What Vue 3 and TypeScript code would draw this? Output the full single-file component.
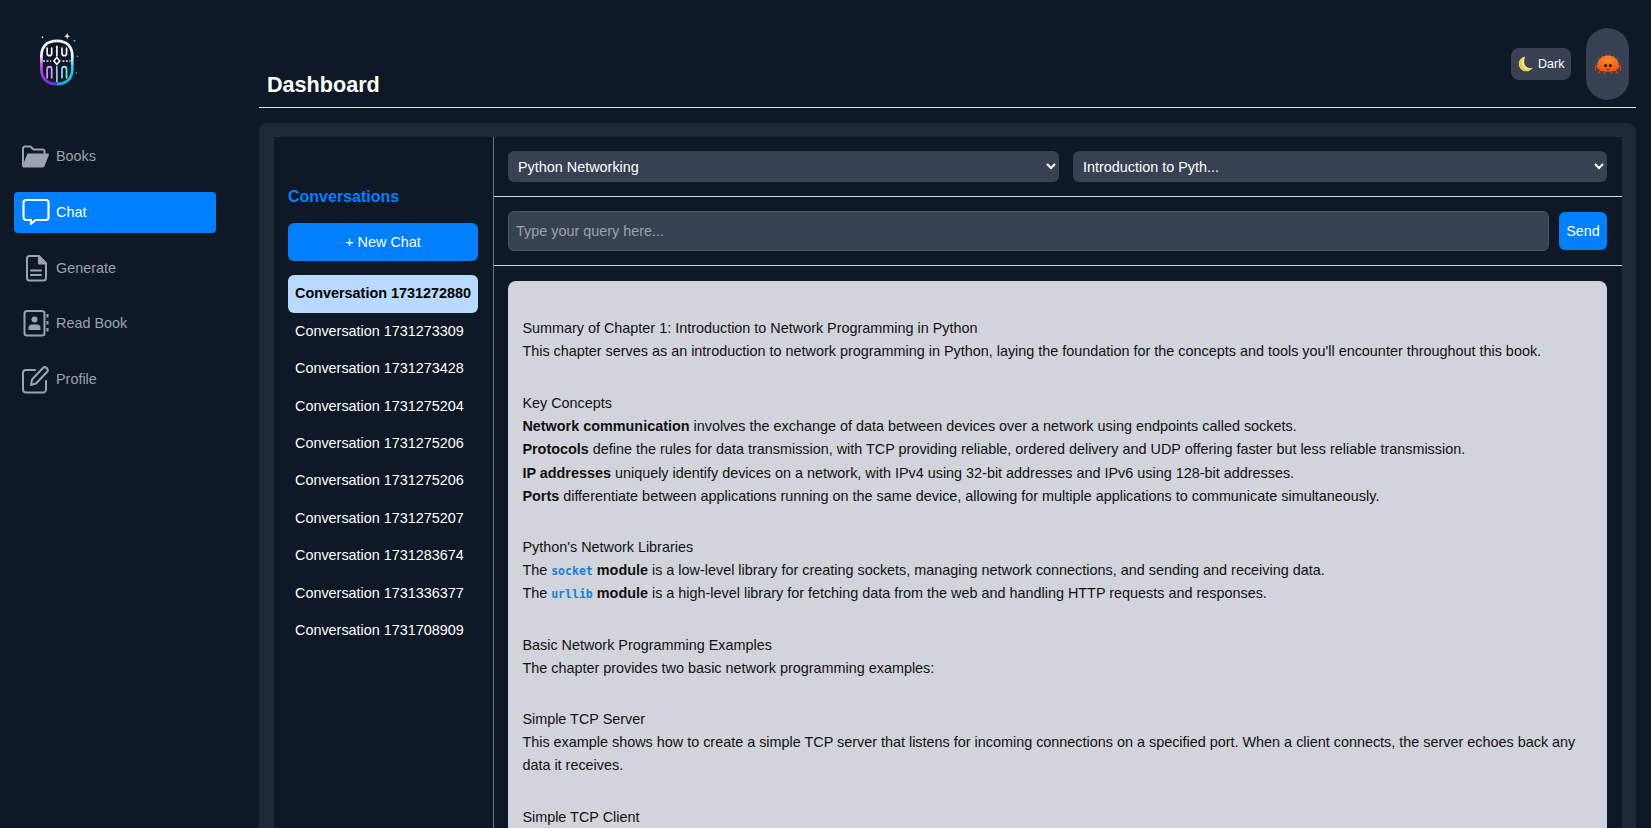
<template>
  <div class="layout">
    <!-- Sidebar -->
    <aside class="sidebar">
      <div class="logo">
        <svg width="64" height="69" viewBox="0 0 56 56" preserveAspectRatio="none" fill="none">
          <defs>
            <linearGradient id="ring" x1="0" y1="0" x2="0" y2="1">
              <stop offset="0.35" stop-color="#f2f5f8" />
              <stop offset="0.55" stop-color="#d24fe0" />
              <stop offset="1" stop-color="#6a2ee0" />
            </linearGradient>
            <linearGradient id="ringRight" x1="0" y1="0" x2="0" y2="1">
              <stop offset="0.35" stop-color="#eef6f8" />
              <stop offset="0.6" stop-color="#22d3ee" />
              <stop offset="1" stop-color="#1aa7d8" />
            </linearGradient>
            <linearGradient id="lower" x1="0" y1="0" x2="1" y2="0">
              <stop offset="0" stop-color="#e58cf0" />
              <stop offset="1" stop-color="#7fe9f5" />
            </linearGradient>
          </defs>
          <path d="M27 8C18 8 13.500 13 13.500 20V31C13.500 38 18 43 27 43" stroke="url(#ring)" stroke-width="2.400" />
          <path d="M27 8C36 8 40.500 13 40.500 20V31C40.500 38 36 43 27 43" stroke="url(#ringRight)" stroke-width="2.400" />
          <path d="M18.500 14V18a2 2 0 0 0 4 0V14M31.500 14V18a2 2 0 0 0 4 0V14M27 12.500V20" stroke="#eef2f5" stroke-width="1.500" stroke-linecap="round" />
          <path d="M27 21.500l2.600 2.800-2.600 2.800-2.600-2.800z" stroke="#ffffff" stroke-width="1.300" />
          <path d="M15 24.300h7M32 24.300h7" stroke="#eef2f5" stroke-width="1.200" stroke-dasharray="1.600 1.400" />
          <path d="M18.500 38V31a2 2 0 0 1 4 0V38M31.500 38V31a2 2 0 0 1 4 0V38M27 29V41" stroke="url(#lower)" stroke-width="1.500" stroke-linecap="round" />
          <path d="M36 1.500l.7 2 2 .7-2 .7-.7 2-.7-2-2-.7 2-.7z" fill="#e8edf2" />
          <circle cx="14.500" cy="5" r=".8" fill="#c7ced6" />
          <circle cx="42.500" cy="8" r=".8" fill="#22d3ee" />
          <circle cx="44" cy="15" r=".5" fill="#4b7f8c" />
          <circle cx="45" cy="20.500" r=".7" fill="#2bb8c9" />
          <circle cx="44" cy="34" r=".7" fill="#1f9fae" />
        </svg>
      </div>
      <nav class="nav">
        <a v-for="item in navItems" :key="item.label" :class="['nav-item', { active: item.label === 'Chat' }]">
          <span class="nav-icon" v-html="item.icon"></span>
          <span>{{ item.label }}</span>
        </a>
      </nav>
    </aside>

    <div class="main">
      <!-- Header -->
      <header class="topbar">
        <h1>Dashboard</h1>
        <div class="top-actions">
          <button class="theme-btn">
            <svg width="16" height="16" viewBox="0 0 16 16">
              <path d="M7 .5C3.300 1.300.8 4.400.8 8c0 4 3.300 7.300 7.300 7.300 2.900 0 5.400-1.500 6.900-3.900-1 .7-2.400 1-3.800.7-3.100-.6-5.200-3.300-5-6.400.1-1.900.3-3.600.8-5.200z" fill="#f9e07a" />
              <path d="M3.500 6.500c-.3 3.200 1.700 6 4.500 6.700 1.500.4 3 .2 4.300-.3-1.200 1.300-2.800 2-4.400 2-3.500 0-6.300-2.900-6.300-6.400 0-2.200 1.100-4.200 2.700-5.400-.4 1-.7 2.200-.8 3.400z" fill="#e6c255" />
            </svg>
            <span>Dark</span>
          </button>
          <div class="avatar">
            <svg width="28" height="21" viewBox="0 0 28 21">
              <defs>
                <radialGradient id="shell" cx="0.5" cy="0.25" r="0.8">
                  <stop offset="0" stop-color="#ff8c2b" />
                  <stop offset="1" stop-color="#f0500c" />
                </radialGradient>
              </defs>
              <path d="M3.500 11l-2.500 2.500 1 3.500M24.500 11l2.500 2.500-1 3.500M7 16l-3 3.500M21 16l3 3.500M11 17l-1 3M17 17l1 3" stroke="#d2481a" stroke-width="1.200" fill="none" />
              <path d="M3 12.500C3 6 8 1.500 14 1.500S25 6 25 12.500c0 3-4.500 5-11 5S3 15.500 3 12.500z" fill="url(#shell)" />
              <path d="M5.500 5.500l-1.200-1.300M8.500 3.200L8 1.700M12.500 1.800V.4M15.500 1.800V.4M19.500 3.200L20 1.700M22.500 5.500l1.200-1.300" stroke="#f0600e" stroke-width=".9" />
              <circle cx="11.700" cy="11.500" r="1.500" fill="#1c1210" />
              <circle cx="16.300" cy="11.500" r="1.500" fill="#1c1210" />
              <path d="M12 14.800c1.300.7 2.700.7 4 0" stroke="#8f2a0c" stroke-width=".8" fill="none" />
            </svg>
          </div>
        </div>
      </header>

      <!-- Chat panel -->
      <section class="panel">
        <div class="chat">
          <div class="conversations">
            <h2>Conversations</h2>
            <button class="new-chat">+ New Chat</button>
            <ul>
              <li v-for="(c, i) in conversations" :key="i" :class="{ selected: i === 0 }">Conversation {{ c }}</li>
            </ul>
          </div>

          <div class="thread">
            <div class="pickers">
              <select><option>Python Networking</option></select>
              <select><option>Introduction to Pyth...</option></select>
            </div>
            <div class="query">
              <input type="text" placeholder="Type your query here..." />
              <button class="send">Send</button>
            </div>
            <div class="answer-wrap">
              <div class="answer">
                <p>
                  Summary of Chapter 1: Introduction to Network Programming in Python<br />
                  This chapter serves as an introduction to network programming in Python, laying the foundation for the concepts and tools you'll encounter throughout this book.
                </p>
                <p>
                  Key Concepts<br />
                  <b>Network communication</b> involves the exchange of data between devices over a network using endpoints called sockets.<br />
                  <b>Protocols</b> define the rules for data transmission, with TCP providing reliable, ordered delivery and UDP offering faster but less reliable transmission.<br />
                  <b>IP addresses</b> uniquely identify devices on a network, with IPv4 using 32-bit addresses and IPv6 using 128-bit addresses.<br />
                  <b>Ports</b> differentiate between applications running on the same device, allowing for multiple applications to communicate simultaneously.
                </p>
                <p class="libs">
                  Python's Network Libraries<br />
                  The <code>socket</code> <b>module</b> is a low-level library for creating sockets, managing network connections, and sending and receiving data.<br />
                  The <code>urllib</code> <b>module</b> is a high-level library for fetching data from the web and handling HTTP requests and responses.
                </p>
                <p class="examples">
                  Basic Network Programming Examples<br />
                  The chapter provides two basic network programming examples:
                </p>
                <p>
                  Simple TCP Server<br />
                  This example shows how to create a simple TCP server that listens for incoming connections on a specified port. When a client connects, the server echoes back any data it receives.
                </p>
                <p>Simple TCP Client</p>
              </div>
            </div>
          </div>
        </div>
      </section>
    </div>
  </div>
</template>

<script setup lang="ts">
const conversations = [
  1731272880, 1731273309, 1731273428, 1731275204, 1731275206,
  1731275206, 1731275207, 1731283674, 1731336377, 1731708909,
]

const svg = (body: string) =>
  `<svg width="30" height="30" viewBox="0 0 30 30" fill="none" stroke="currentColor" stroke-width="2" stroke-linejoin="round" stroke-linecap="round">${body}</svg>`

const navItems = [
  {
    label: 'Books',
    icon: svg('<path d="M2 24.500V7.500a2 2 0 0 1 2-2h5.500l3 3h9a2 2 0 0 1 2 2v2" /><path d="M2.500 25.500L7 13.500h20l-4 10.500a2 2 0 0 1-1.900 1.500z" fill="currentColor" />'),
  },
  {
    label: 'Chat',
    icon: svg('<path d="M2.500 5.500a2.500 2.500 0 0 1 2.500-2.500h20a2.500 2.500 0 0 1 2.500 2.500v15a2.500 2.500 0 0 1-2.500 2.500H14.500l-4.500 4v-4H5a2.500 2.500 0 0 1-2.500-2.500z" stroke-width="2.200" />'),
  },
  {
    label: 'Generate',
    icon: svg('<path d="M8.500 3h9.500l7 7.500v14.500a2.500 2.500 0 0 1-2.500 2.500h-14a2.500 2.500 0 0 1-2.500-2.500v-19.500a2.500 2.500 0 0 1 2.500-2.500z" /><path d="M18 3.500v7h7z" fill="currentColor" /><path d="M10 17.500h10M10 22h10" />'),
  },
  {
    label: 'Read Book',
    icon: svg('<rect x="3.500" y="3" width="20" height="24.500" rx="2.500" /><circle cx="13.500" cy="11.500" r="3" fill="currentColor" stroke="none" /><path d="M7.500 22v-2a3.500 3.500 0 0 1 3.500-3.500h5a3.500 3.500 0 0 1 3.500 3.500v2z" fill="currentColor" stroke="none" /><path d="M26.500 6v3.500M26.500 13v3.500M26.500 20v3.500" stroke-linecap="butt" />'),
  },
  {
    label: 'Profile',
    icon: svg('<path d="M14 6H5a3 3 0 0 0-3 3v16.500a3 3 0 0 0 3 3h17a3 3 0 0 0 3-3V17" /><path d="M10 21l1-5.500L22 4a2.500 2.500 0 0 1 3.500 0l.5.500a2.500 2.500 0 0 1 0 3.500L15 19.500z" />'),
  },
]
</script>

<style>
html,
body {
  margin: 0;
  height: 100%;
  overflow: hidden;
  background: #0e1826;
}
</style>

<style scoped>
.layout {
  display: flex;
  height: 100vh;
  overflow: hidden;
  background: #0e1826;
  color: #fff;
  font-family: 'Liberation Sans', Arial, sans-serif;
  font-size: 14.4px;
}

/* Sidebar */
.sidebar {
  flex: 0 0 245px;
  padding-left: 14px;
  box-sizing: border-box;
}

.logo {
  height: 192px;
  padding: 31px 0 0 12px;
  box-sizing: border-box;
}

.logo svg {
  display: block;
}

.nav {
  width: 202px;
  margin-top: -56.2px;
  display: flex;
  flex-direction: column;
  gap: 14.7px;
}

.nav-item {
  height: 41px;
  display: flex;
  align-items: center;
  gap: 5px;
  padding-left: 7px;
  border-radius: 4px;
  color: #9ca3af;
}

.nav-item.active {
  background: #007fff;
  color: #fff;
}

.nav-icon {
  display: flex;
  width: 30px;
  height: 30px;
}

/* Header */
.main {
  flex: 1;
  min-width: 0;
  padding: 0 15px 0 14px;
  display: flex;
  flex-direction: column;
}

.topbar {
  height: 108px;
  flex: none;
  box-sizing: border-box;
  border-bottom: 1px solid #e5e7eb;
  padding: 0 7px 0 8px;
  display: flex;
  justify-content: space-between;
}

.topbar h1 {
  align-self: flex-end;
  margin: 0 0 9px;
  font-size: 21.6px;
  line-height: 26px;
}

.top-actions {
  display: flex;
  align-items: center;
  gap: 15px;
  padding: 28px 0 7px;
}

.theme-btn {
  height: 32px;
  width: 60px;
  padding: 0 0 0 7px;
  display: flex;
  align-items: center;
  gap: 4px;
  border: none;
  border-radius: 8px;
  background: #374151;
  color: #fff;
  font: 12.5px 'Liberation Sans', Arial, sans-serif;
}

.avatar {
  width: 43px;
  height: 72px;
  border-radius: 22px;
  background: #374151;
  display: flex;
  align-items: center;
  justify-content: center;
}

/* Panel */
.panel {
  flex: 1;
  margin-top: 15px;
  padding: 14px 14px 0 15px;
  background: #1d2a36;
  border-radius: 8px 8px 0 0;
  min-height: 0;
}

.chat {
  display: flex;
  height: 100%;
  background: #0e1826;
}

.conversations {
  flex: 0 0 220px;
  min-width: 0;
  box-sizing: border-box;
  padding: 50px 15px 0 14px;
  border-right: 1px solid #6b7280;
}

.conversations h2 {
  margin: 0 0 17px;
  font-size: 16px;
  line-height: 19px;
  color: #007fff;
}

.new-chat {
  width: 100%;
  height: 38px;
  border: none;
  border-radius: 6px;
  background: #007fff;
  color: #fff;
  font: 14.4px 'Liberation Sans', Arial, sans-serif;
}

.conversations ul {
  list-style: none;
  margin: 14.4px 0 0;
  padding: 0;
}

.conversations li {
  padding: 8px 7px;
  line-height: 21.4px;
  border-radius: 6px;
  white-space: nowrap;
}

.conversations li.selected {
  background: #b8daff;
  color: #000;
  font-weight: 700;
}

.thread {
  flex: 1;
  min-width: 0;
  display: flex;
  flex-direction: column;
}

.pickers {
  display: grid;
  grid-template-columns: 551fr 534fr;
  gap: 14px;
  padding: 14px 15px 14px 14px;
  border-bottom: 1px solid #d1d5db;
}

.pickers select {
  height: 31px;
  width: 100%;
  padding: 0 6px;
  border: none;
  border-radius: 6px;
  background: #374151;
  color: #fff;
  font: 14.4px 'Liberation Sans', Arial, sans-serif;
}

.query {
  display: flex;
  align-items: center;
  gap: 10px;
  padding: 14px 15px 14px 14px;
  border-bottom: 1px solid #d1d5db;
}

.query input {
  flex: 1;
  min-width: 0;
  height: 40px;
  box-sizing: border-box;
  padding: 0 7px;
  border: 1px solid #4b5563;
  border-radius: 6px;
  background: #374151;
  color: #fff;
  font: 14.4px 'Liberation Sans', Arial, sans-serif;
}

.query input::placeholder {
  color: #9ca3af;
}

.send {
  width: 48px;
  height: 38px;
  padding: 0;
  border: none;
  border-radius: 6px;
  background: #007fff;
  color: #fff;
  font: 14.4px 'Liberation Sans', Arial, sans-serif;
}

.answer-wrap {
  flex: 1;
  min-height: 0;
  padding: 15px 15px 0 14px;
}

.answer {
  min-height: 100%;
  box-sizing: border-box;
  padding: 35.5px 14px 14px 14.4px;
  background: #d1d5db;
  border-radius: 8px 8px 0 0;
  color: #111;
  line-height: 23.04px;
}

.answer p {
  margin: 0 0 28.8px;
}

.answer p:first-child {
  margin-bottom: 29.8px;
}

/* the inline code would otherwise push these lines apart */
.answer p.libs {
  line-height: 22.4px;
}

.answer p.examples {
  margin-bottom: 27.8px;
}

.answer code {
  font-family: 'DejaVu Sans Mono', monospace;
  font-size: 11.52px;
  font-weight: 700;
  color: #1a7fcf;
}
</style>
